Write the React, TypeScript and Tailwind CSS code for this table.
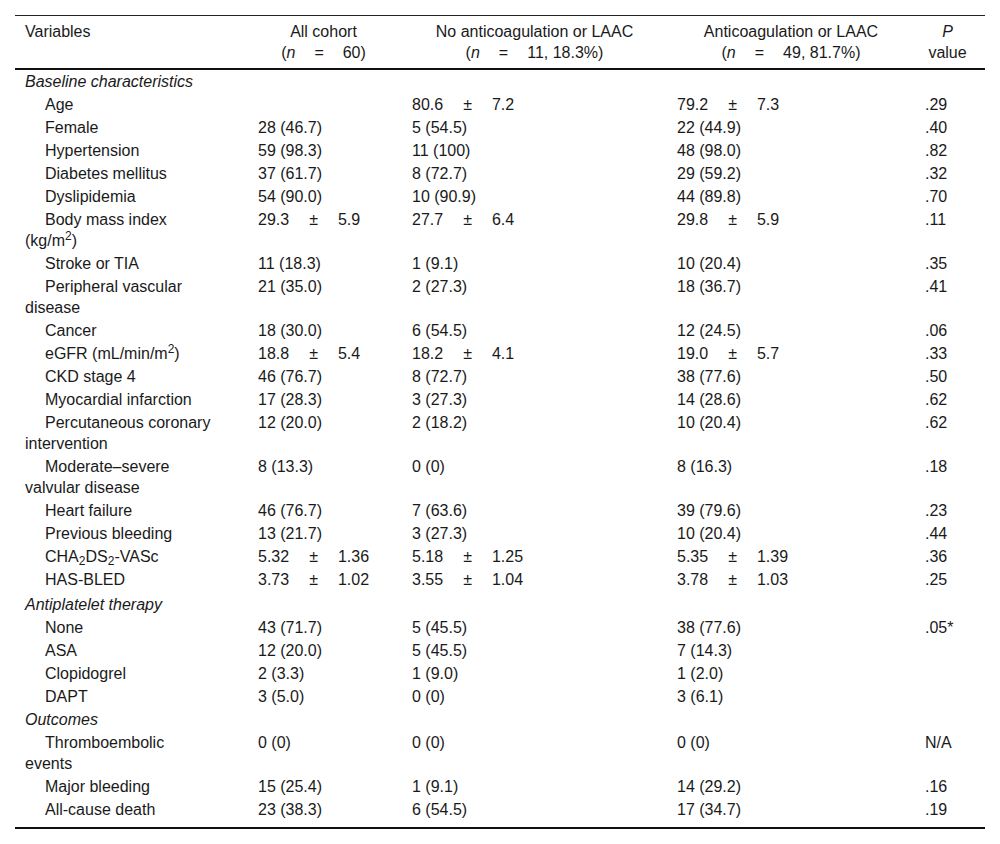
import React from "react";

type Row = {
  label: React.ReactNode;
  section?: boolean;
  gap?: boolean;
  cells?: React.ReactNode[];
};

function pm(a: string, b: string) {
  return (
    <>
      {a}
      <span className="mx-[20px]">±</span>
      {b}
    </>
  );
}

function nEq(v: string) {
  return (
    <>
      (<i>n</i>
      <span className="mx-[19px]">=</span>
      {v})
    </>
  );
}

const rows: Row[] = [
  { label: "Baseline characteristics", section: true },
  { label: "Age", cells: ["", pm("80.6", "7.2"), pm("79.2", "7.3"), ".29"] },
  { label: "Female", cells: ["28 (46.7)", "5 (54.5)", "22 (44.9)", ".40"] },
  { label: "Hypertension", cells: ["59 (98.3)", "11 (100)", "48 (98.0)", ".82"] },
  { label: "Diabetes mellitus", cells: ["37 (61.7)", "8 (72.7)", "29 (59.2)", ".32"] },
  { label: "Dyslipidemia", cells: ["54 (90.0)", "10 (90.9)", "44 (89.8)", ".70"] },
  {
    label: (
      <>
        Body mass index (kg/m<sup>2</sup>)
      </>
    ),
    cells: [pm("29.3", "5.9"), pm("27.7", "6.4"), pm("29.8", "5.9"), ".11"],
  },
  { label: "Stroke or TIA", cells: ["11 (18.3)", "1 (9.1)", "10 (20.4)", ".35"] },
  { label: "Peripheral vascular disease", cells: ["21 (35.0)", "2 (27.3)", "18 (36.7)", ".41"] },
  { label: "Cancer", cells: ["18 (30.0)", "6 (54.5)", "12 (24.5)", ".06"] },
  {
    label: (
      <>
        eGFR (mL/min/m<sup>2</sup>)
      </>
    ),
    cells: [pm("18.8", "5.4"), pm("18.2", "4.1"), pm("19.0", "5.7"), ".33"],
  },
  { label: "CKD stage 4", cells: ["46 (76.7)", "8 (72.7)", "38 (77.6)", ".50"] },
  { label: "Myocardial infarction", cells: ["17 (28.3)", "3 (27.3)", "14 (28.6)", ".62"] },
  { label: "Percutaneous coronary intervention", cells: ["12 (20.0)", "2 (18.2)", "10 (20.4)", ".62"] },
  { label: "Moderate–severe valvular disease", cells: ["8 (13.3)", "0 (0)", "8 (16.3)", ".18"] },
  { label: "Heart failure", cells: ["46 (76.7)", "7 (63.6)", "39 (79.6)", ".23"] },
  { label: "Previous bleeding", cells: ["13 (21.7)", "3 (27.3)", "10 (20.4)", ".44"] },
  {
    label: (
      <>
        CHA<sub>2</sub>DS<sub>2</sub>-VASc
      </>
    ),
    cells: [pm("5.32", "1.36"), pm("5.18", "1.25"), pm("5.35", "1.39"), ".36"],
  },
  { label: "HAS-BLED", cells: [pm("3.73", "1.02"), pm("3.55", "1.04"), pm("3.78", "1.03"), ".25"] },
  { label: "Antiplatelet therapy", section: true, gap: true },
  { label: "None", cells: ["43 (71.7)", "5 (45.5)", "38 (77.6)", ".05*"] },
  { label: "ASA", cells: ["12 (20.0)", "5 (45.5)", "7 (14.3)", ""] },
  { label: "Clopidogrel", cells: ["2 (3.3)", "1 (9.0)", "1 (2.0)", ""] },
  { label: "DAPT", cells: ["3 (5.0)", "0 (0)", "3 (6.1)", ""] },
  { label: "Outcomes", section: true },
  { label: "Thromboembolic events", cells: ["0 (0)", "0 (0)", "0 (0)", "N/A"] },
  { label: "Major bleeding", cells: ["15 (25.4)", "1 (9.1)", "14 (29.2)", ".16"] },
  { label: "All-cause death", cells: ["23 (38.3)", "6 (54.5)", "17 (34.7)", ".19"] },
];

const th = "border-t border-b-2 border-t-[#222] border-b-[#111] px-[10px] py-[5px] align-top font-normal text-center";

export default function App() {
  return (
    <div className="min-h-[844px] bg-white pt-[15px] pl-[15px] font-['Liberation_Sans',Arial,sans-serif] text-[16px] leading-[21px] text-[#1a1a1a]">
      <table className="w-[970px] table-fixed border-separate border-spacing-0">
        <colgroup>
          <col className="w-[233px]" />
          <col className="w-[154px]" />
          <col className="w-[265px]" />
          <col className="w-[248px]" />
          <col className="w-[70px]" />
        </colgroup>
        <thead>
          <tr>
            <th className={th + " !text-left pr-[35px]"}>Variables</th>
            <th className={th + " !pl-[7px]"}>
              All cohort
              <br />
              {nEq("60")}
            </th>
            <th className={th}>
              No anticoagulation or LAAC
              <br />
              {nEq("11, 18.3%")}
            </th>
            <th className={th}>
              Anticoagulation or LAAC
              <br />
              {nEq("49, 81.7%")}
            </th>
            <th className={th + " pr-[15px]"}>
              <i>P</i> value
            </th>
          </tr>
        </thead>
        <tbody>
          {rows.map((r, i) => {
            const last = i === rows.length - 1;
            const edge = last ? "pb-[7px] border-b-2 border-b-[#111]" : "pb-[1px]";
            if (r.section) {
              return (
                <tr key={i}>
                  <td
                    colSpan={5}
                    className={"pl-[10px] italic align-top " + (r.gap ? "pt-[3px] " : "pt-[1px] ") + edge}
                  >
                    {r.label}
                  </td>
                </tr>
              );
            }
            return (
              <tr key={i}>
                <td className={"pl-[10px] pr-[35px] pt-[1px] indent-[20px] align-top " + edge}>{r.label}</td>
                {r.cells!.map((c, j) => (
                  <td
                    key={j}
                    className={
                      "pl-[10px] pt-[1px] align-top whitespace-nowrap " +
                      (j === 3 ? "pr-[15px] " : "pr-[10px] ") +
                      edge
                    }
                  >
                    {c}
                  </td>
                ))}
              </tr>
            );
          })}
        </tbody>
      </table>
    </div>
  );
}
